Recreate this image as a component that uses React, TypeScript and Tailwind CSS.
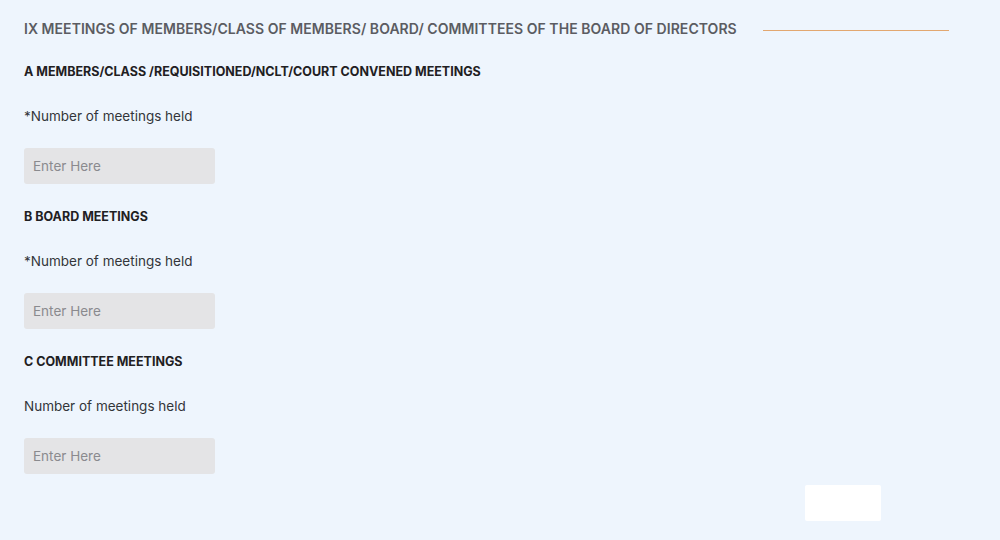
import React from "react";

const font = { fontFamily: '"Inter", "Noto Sans", sans-serif' };

function Section({ title, label }: { title: string; label: string }) {
  return (
    <div className="flex flex-col">
      <div className="mt-[23px] text-[12.5px] leading-[20px] font-bold text-[#1f2022]">{title}</div>
      <div className="mt-[24px] text-[13.5px] leading-[20px] text-[#33353a]">{label}</div>
      <input
        placeholder="Enter Here"
        className="mt-[22px] w-[191px] h-[36px] rounded-[3px] bg-[#e4e4e6] px-[9px] text-[13.5px] text-[#444] placeholder:text-[#8a8a8e] outline-none"
        style={font}
      />
    </div>
  );
}

export default function App() {
  return (
    <div className="w-[1000px] h-[540px] bg-[#eef5fd] px-[24px] flex flex-col" style={font}>
      <div className="flex items-start pt-[19px] h-[39px]">
        <div className="h-[20px] text-[14px] leading-[20px] tracking-[0.048px] font-semibold text-[#5b5c62] whitespace-nowrap">
          IX MEETINGS OF MEMBERS/CLASS OF MEMBERS/ BOARD/ COMMITTEES OF THE BOARD OF DIRECTORS
        </div>
        <div className="ml-[26px] w-[186px] h-[1px] bg-[#e2a770] mt-[11px]" />
      </div>
      <Section title="A MEMBERS/CLASS /REQUISITIONED/NCLT/COURT CONVENED MEETINGS" label="*Number of meetings held" />
      <Section title="B BOARD MEETINGS" label="*Number of meetings held" />
      <Section title="C COMMITTEE MEETINGS" label="Number of meetings held" />
      <div className="ml-[781px] mt-[11px] w-[76px] h-[36px] bg-white rounded-[2px]" />
    </div>
  );
}
